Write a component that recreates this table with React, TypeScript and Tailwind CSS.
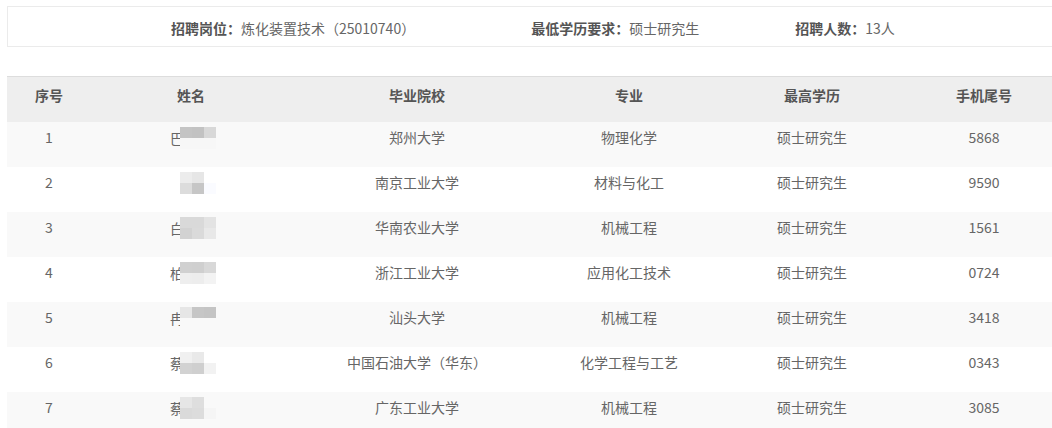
import React from "react";

const rows = [
  { n: "1", first: "巴", school: "郑州大学", major: "物理化学", edu: "硕士研究生", phone: "5868", blocks: [["#c4c4c4", "#c2c2c2", "#d8d8d8"], ["#f7f7f7", "#f7f7f7", "#f7f7f7"]] },
  { n: "2", first: "", school: "南京工业大学", major: "材料与化工", edu: "硕士研究生", phone: "9590", blocks: [["#ececec", "#e6e6e6", "#ffffff"], ["#dcdcdc", "#c6c6c6", "#fafbff"]] },
  { n: "3", first: "白", school: "华南农业大学", major: "机械工程", edu: "硕士研究生", phone: "1561", blocks: [["#d9d9d9", "#d9d9d9", "#e3e3e3"], ["#d2d2d2", "#dadada", "#e8e8e8"]] },
  { n: "4", first: "柏", school: "浙江工业大学", major: "应用化工技术", edu: "硕士研究生", phone: "0724", blocks: [["#d0d0d0", "#cfcfcf", "#d8d8d8"], ["#eeeeee", "#ededed", "#f3f3f3"]] },
  { n: "5", first: "冉", school: "汕头大学", major: "机械工程", edu: "硕士研究生", phone: "3418", blocks: [["#e6e6e6", "#c6c6c6", "#c4c4c4"], ["#f9f9f9", "#f9f9f9", "#f9f9f9"]] },
  { n: "6", first: "蔡", school: "中国石油大学（华东）", major: "化学工程与工艺", edu: "硕士研究生", phone: "0343", blocks: [["#f0f0f0", "#e9e9e9", "#ffffff"], ["#d2d2d2", "#cfcfcf", "#f2f2f2"]] },
  { n: "7", first: "蔡", school: "广东工业大学", major: "机械工程", edu: "硕士研究生", phone: "3085", blocks: [["#e6e6e6", "#dedede", "#f9f9f9"], ["#dadada", "#dcdcdc", "#f5f5f5"]] },
];

const cols = ["w-[84px]", "w-[200px]", "w-[252px]", "w-[172px]", "w-[194px]", "w-[150px]"];

function Name({ first, blocks }: { first: string; blocks: string[][] }) {
  return (
    <span className="inline-flex items-center">
      <span className="inline-block w-[14px] whitespace-nowrap">{first || "\u00a0"}</span>
      <span className="inline-flex flex-col -ml-[4px] relative">
        {blocks.map((r, i) => (
          <span key={i} className="flex">
            {r.map((c, j) => (
              <span key={j} className="block w-[12px] h-[11px]" style={{ background: c }} />
            ))}
          </span>
        ))}
      </span>
    </span>
  );
}

export default function App() {
  return (
    <div
      className="w-[1052px] h-[428px] overflow-hidden bg-white text-[14px] text-[#666]"
      style={{ fontFamily: '"Noto Sans CJK SC", "Noto Sans", sans-serif' }}
    >
      <div className="pt-[6px] pl-[7px]">
        <div className="w-[1060px] h-[41px] border border-[#ebebeb] flex items-center leading-[20px] pt-[2px]">
          <div className="ml-[163px]">
            <span className="font-bold text-[#555]">招聘岗位：</span>炼化装置技术（25010740）
          </div>
          <div className="ml-[116px]">
            <span className="font-bold text-[#555]">最低学历要求：</span>硕士研究生
          </div>
          <div className="ml-[96px]">
            <span className="font-bold text-[#555]">招聘人数：</span>13人
          </div>
        </div>

        <div className="mt-[29px] w-[1060px] leading-[20px]">
          <div className="flex h-[46px] items-start pt-[8px] bg-[#eeeeee] border-t border-[#dddddd] font-bold text-[#555]">
            {["序号", "姓名", "毕业院校", "专业", "最高学历", "手机尾号"].map((h, i) => (
              <div key={h} className={`${cols[i]} text-center`}>{h}</div>
            ))}
          </div>
          {rows.map((r, idx) => (
            <div
              key={r.n}
              className={`flex h-[45px] items-start pt-[5px] ${idx % 2 === 0 ? "bg-[#f9f9f9]" : "bg-white"}`}
            >
              <div className={`${cols[0]} text-center`}>{r.n}</div>
              <div className={`${cols[1]} flex justify-center pl-[4px]`}>
                <Name first={r.first} blocks={r.blocks} />
              </div>
              <div className={`${cols[2]} text-center`}>{r.school}</div>
              <div className={`${cols[3]} text-center`}>{r.major}</div>
              <div className={`${cols[4]} text-center`}>{r.edu}</div>
              <div className={`${cols[5]} text-center`}>{r.phone}</div>
            </div>
          ))}
        </div>
      </div>
    </div>
  );
}
